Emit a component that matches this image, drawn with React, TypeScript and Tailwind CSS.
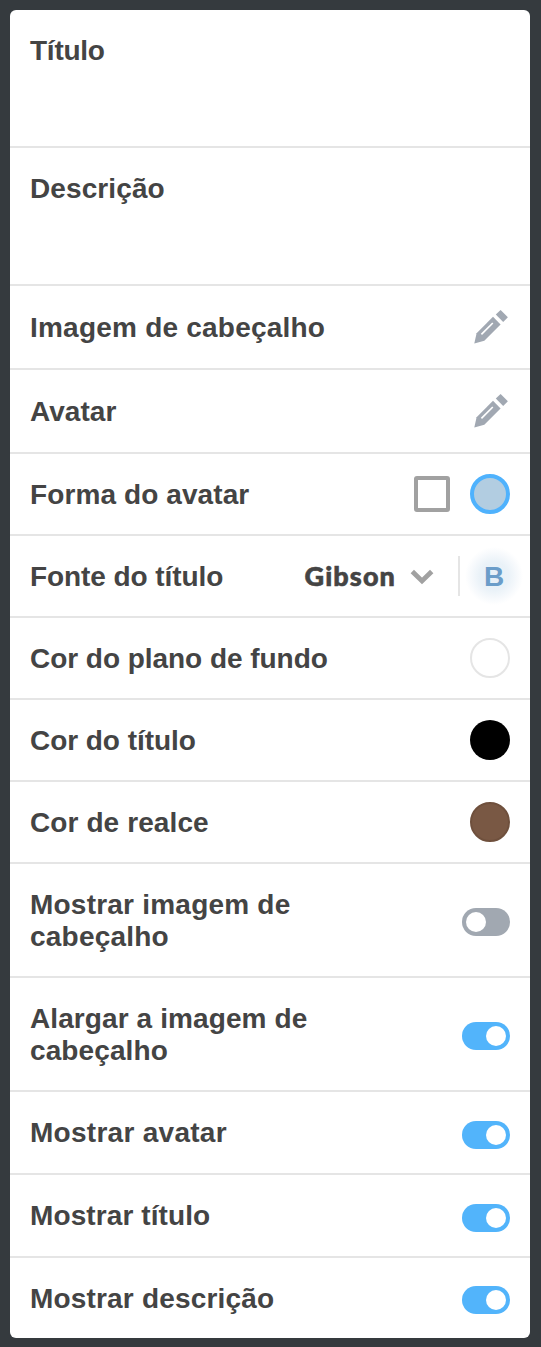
import type { ReactNode } from "react";

function Row({ label, className = "", children, tracking = "tracking-[0.1px]" }: { label: string; className?: string; children?: ReactNode; tracking?: string }) {
  return (
    <div className={`flex justify-between border-[#e5e5e5] px-5 pt-6 ${className}`}>
      <div className={`mt-px max-w-[310px] text-[28px] leading-8 font-bold ${tracking}`}>{label}</div>
      {children}
    </div>
  );
}

function Pencil() {
  return (
    <svg className="-mt-px mr-0.5 h-[34px] w-[34px]" viewBox="0 0 34 34" fill="#a1a8b2">
      <path d="M0.3 33.5L2.6 23.2L19 6.8L26.6 14.4L10.3 30.8Z" />
      <path d="M21.8 4.6L26.6 0L33.9 7.2L29.2 11.9Z" />
      <path d="M7.4 24.4L18.8 13" stroke="white" strokeWidth="1.7" />
    </svg>
  );
}

function Toggle({ on = false, className = "mt-1" }: { on?: boolean; className?: string }) {
  return (
    <div className={`flex h-7 w-12 shrink-0 rounded-full p-1 ${on ? "justify-end bg-[#52b4fb]" : "justify-start bg-[#a1a8b1]"} ${className}`}>
      <div className="h-5 w-5 rounded-full bg-white" />
    </div>
  );
}

export default function App() {
  return (
    <div className="h-[1347px] w-[541px] bg-[#353a3e] pt-2.5 pl-2.5 font-['Liberation_Sans',sans-serif] text-[#444444]">
      <div className="h-[1328px] w-[520px] overflow-hidden rounded-md bg-white">
        <Row label="Título" tracking="tracking-[-0.25px]" className="h-[138px] border-b-2" />
        <Row label="Descrição" className="h-[138px] border-b-2" />
        <Row label="Imagem de cabeçalho" tracking="tracking-[0.22px]" className="h-[84px] border-b-2 pt-[25px]"><Pencil /></Row>
        <Row label="Avatar" tracking="tracking-[0.05px]" className="h-[84px] border-b-2 pt-[25px]"><Pencil /></Row>
        <Row label="Forma do avatar" className="h-[82px] border-b-2">
          <div className="-mt-1 flex h-10 items-center gap-5">
            <div className="h-9 w-9 rounded-[3px] border-4 border-[#a1a1a1]" />
            <div className="h-10 w-10 rounded-full border-4 border-[#4fb2fd] bg-[#b2cde1]" />
          </div>
        </Row>
        <Row label="Fonte do título" tracking="tracking-[-0.07px]" className="h-[82px] border-b-2">
          <div className="-mt-1 -mr-[11px] flex h-10 items-center">
            <span className="font-['Lato',sans-serif] text-[27px] leading-8 font-black tracking-[1.1px] [-webkit-text-stroke:0.6px_#444444]">Gibson</span>
            <svg className="mt-0.5 ml-[14px] h-4 w-6" viewBox="0 0 24 16" fill="none" stroke="#a1a1a1" strokeWidth="4.8">
              <path d="M2.3 2.5L12 12L21.7 2.5" />
            </svg>
            <div className="ml-6 h-10 w-0.5 bg-[#e5e5e5]" />
            <div className="ml-[5px] -mr-0.5 flex h-[58px] w-[58px] items-center justify-center bg-[radial-gradient(closest-side,#e6eff7_0%,#eaf2f8_50%,#f6f9fc_78%,#ffffff_100%)] pt-0.5 text-[28px] font-bold text-[#6b9dc9]">B</div>
          </div>
        </Row>
        <Row label="Cor do plano de fundo" tracking="tracking-[-0.04px]" className="h-[82px] border-b-2"><div className="-mt-1 h-10 w-10 rounded-full border-2 border-[#e5e5e5]" /></Row>
        <Row label="Cor do título" tracking="tracking-[-0.05px]" className="h-[82px] border-b-2"><div className="-mt-1 h-10 w-10 rounded-full bg-black" /></Row>
        <Row label="Cor de realce" className="h-[82px] border-b-2"><div className="-mt-1 h-10 w-10 rounded-full border-2 border-[#6f503d] bg-[#795844]" /></Row>
        <Row label="Mostrar imagem de cabeçalho" tracking="tracking-[0.22px]" className="h-[114px] border-b-2"><Toggle className="mt-5" /></Row>
        <Row label="Alargar a imagem de cabeçalho" className="h-[114px] border-b-2"><Toggle on className="mt-5" /></Row>
        <Row label="Mostrar avatar" tracking="tracking-[0.28px]" className="h-[83px] border-b-2"><Toggle on className="mt-[5px]" /></Row>
        <Row label="Mostrar título" className="h-[83px] border-b-2"><Toggle on className="mt-[5px]" /></Row>
        <Row label="Mostrar descrição" tracking="tracking-[0.18px]" className="h-20"><Toggle on /></Row>
      </div>
    </div>
  );
}
